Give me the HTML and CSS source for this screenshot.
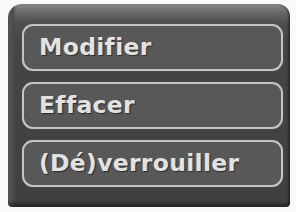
FILE: index.html
```html
<!DOCTYPE html>
<html lang="fr">
<head>
    <meta charset="UTF-8">
    <meta name="viewport" content="width=device-width, initial-scale=1.0">
    <title>Menu</title>
    <link rel="stylesheet" href="styles.css">
</head>
<body>
    <div class="menu">
        <button class="menu-btn">Modifier</button>
        <button class="menu-btn">Effacer</button>
        <button class="menu-btn">(Dé)verrouiller</button>
    </div>
</body>
</html>
```

FILE: styles.css
```css
body {
    margin: 0;
    padding: 4px 6px 5px 8px;
    background-color: #fafafa;
    font-family: 'DejaVu Sans', Verdana, sans-serif;
}
.menu {
    display: flex;
    flex-direction: column;
    gap: 11px;
    height: 203px;
    box-sizing: border-box;
    padding: 20px 7px 0 14px;
    border-radius: 14px 12px 4px 4px;
    background:
        linear-gradient(to right, #5c5c5c 0, #4a4a4a 5px, rgba(0,0,0,0) 8px),
        linear-gradient(to bottom, #8a8a8a 0, #6a6a6a 8px, #505050 18px, #454545 40px, #404040 100%);
    box-shadow: inset -2px 0 2px rgba(0, 0, 0, 0.3), inset 0 -4px 3px rgba(0, 0, 0, 0.35);
}
.menu-btn {
    height: 47px;
    box-sizing: border-box;
    padding: 0 0 1px 15px;
    text-align: left;
    font-family: 'DejaVu Sans', Verdana, sans-serif;
    font-weight: bold;
    font-size: 23.5px;
    letter-spacing: 0.3px;
    color: #e2e2e2;
    text-shadow: 1px 1px 1px #2a2a2a;
    background-color: #585858;
    border: 2px solid #c4c4c4;
    border-radius: 11px;
    box-shadow: 0 0 1px #777;
    cursor: pointer;
}
.menu-btn:hover {
    background-color: #626262;
}
```
